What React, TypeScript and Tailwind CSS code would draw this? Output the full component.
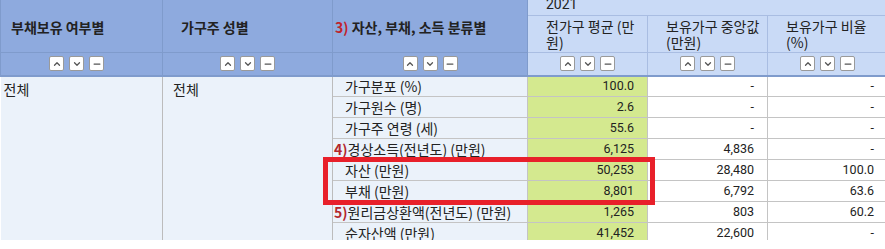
import { ChevronUp, ChevronDown, Minus } from "lucide-react";

const rows = [
  { no: "", label: "가구분포 (%)", avg: "100.0", med: "-", pct: "-" },
  { no: "", label: "가구원수 (명)", avg: "2.6", med: "-", pct: "-" },
  { no: "", label: "가구주 연령 (세)", avg: "55.6", med: "-", pct: "-" },
  { no: "4)", label: "경상소득(전년도) (만원)", avg: "6,125", med: "4,836", pct: "-" },
  { no: "", label: "자산 (만원)", avg: "50,253", med: "28,480", pct: "100.0" },
  { no: "", label: "부채 (만원)", avg: "8,801", med: "6,792", pct: "63.6" },
  { no: "5)", label: "원리금상환액(전년도) (만원)", avg: "1,265", med: "803", pct: "60.2" },
  { no: "", label: "순자산액 (만원)", avg: "41,452", med: "22,600", pct: "-" },
];

function SortButtons() {
  return (
    <div className="flex items-center justify-center gap-[5px]">
      {[ChevronUp, ChevronDown, Minus].map((Icon, i) => (
        <span
          key={i}
          className="w-[15px] h-[15px] bg-white border border-[#9a9a9a] rounded-[2px] flex items-center justify-center"
        >
          <Icon className="w-[10px] h-[10px] text-[#555]" strokeWidth={3} />
        </span>
      ))}
    </div>
  );
}

export default function App() {
  const font = { fontFamily: '"Noto Sans CJK KR", "Noto Sans", sans-serif' };
  const num = "font-['Roboto',sans-serif] text-[12.5px]";
  return (
    <div className="w-[885px] h-[249px] bg-white overflow-hidden" style={font}>
      <div className="relative w-[885px] h-[240px] overflow-hidden">
        <table className="table-fixed border-collapse w-[887px] -mt-[6px] text-[14px] leading-[16px] text-[#222]">
          <colgroup>
            <col className="w-[162px]" />
            <col className="w-[170px]" />
            <col className="w-[195px]" />
            <col className="w-[120px]" />
            <col className="w-[120px]" />
            <col className="w-[120px]" />
          </colgroup>
          <thead>
            <tr className="h-[21px]">
              <th rowSpan={2} className="bg-[#8eaade] border border-[#7f9bcc] text-left font-bold pl-[10px] pt-[6px]">
                부채보유 여부별
              </th>
              <th rowSpan={2} className="bg-[#8eaade] border border-[#7f9bcc] text-left font-bold pl-[18px] pt-[6px]">
                가구주 성별
              </th>
              <th rowSpan={2} className="bg-[#8eaade] border border-[#7f9bcc] text-left font-bold pl-[2px] pt-[6px]">
                <span className="text-[#c0232b]">3)</span> 자산, 부채, 소득 분류별
              </th>
              <th colSpan={3} className={`bg-[#c9daf6] border border-[#a9bde2] text-left font-normal pl-[18px] align-bottom pb-[3px] ${num} text-[14px]`}>
                2021
              </th>
            </tr>
            <tr className="h-[37px]">
              <th className="bg-[#c9daf6] border border-[#a9bde2] text-left font-normal pl-[18px] pr-[4px] align-middle">
                전가구 평균 (만원)
              </th>
              <th className="bg-[#c9daf6] border border-[#a9bde2] text-left font-normal pl-[18px] pr-[4px] align-middle">
                보유가구 중앙값 (만원)
              </th>
              <th className="bg-[#c9daf6] border border-[#a9bde2] text-left font-normal pl-[18px] pr-[4px] align-middle">
                보유가구 비율 (%)
              </th>
            </tr>
            <tr className="h-[23px]">
              <td className="bg-[#8eaade] border border-[#7f9bcc] border-b-2 pr-[10px]"><SortButtons /></td>
              <td className="bg-[#8eaade] border border-[#7f9bcc] border-b-2"><SortButtons /></td>
              <td className="bg-[#8eaade] border border-[#7f9bcc] border-b-2"><SortButtons /></td>
              <td className="bg-[#c9daf6] border border-[#a9bde2] border-b-2 border-b-[#7f9bcc]"><SortButtons /></td>
              <td className="bg-[#c9daf6] border border-[#a9bde2] border-b-2 border-b-[#7f9bcc]"><SortButtons /></td>
              <td className="bg-[#c9daf6] border border-[#a9bde2] border-b-2 border-b-[#7f9bcc]"><SortButtons /></td>
            </tr>
          </thead>
          <tbody>
            {rows.map((r, i) => (
              <tr key={r.label} className="h-[21px]">
                {i === 0 && (
                  <>
                    <td rowSpan={rows.length} className="bg-[#ebf2fa] border-r border-[#bcbcbc] align-top pl-[3px] pt-[4px]">
                      전체
                    </td>
                    <td rowSpan={rows.length} className="bg-[#ebf2fa] border-r border-[#bcbcbc] align-top pl-[10px] pt-[4px]">
                      전체
                    </td>
                  </>
                )}
                <td className="bg-[#ebf2fa] border-b border-r border-[#c4c4c4] whitespace-nowrap pl-[1px]">
                  {r.no ? (
                    <span className="font-bold text-[#b3262b]">{r.no}</span>
                  ) : (
                    <span className="inline-block w-[11px]" />
                  )}
                  {r.label}
                </td>
                <td className={`bg-[#d4e98f] border-b border-r border-[#c4c4c4] text-right pr-[13px] ${num}`}>{r.avg}</td>
                <td className={`bg-white border-b border-r border-[#c4c4c4] text-right pr-[13px] ${num}`}>{r.med}</td>
                <td className={`bg-white border-b border-r border-[#c4c4c4] text-right pr-[13px] ${num}`}>{r.pct}</td>
              </tr>
            ))}
          </tbody>
        </table>
        <div className="absolute left-[323px] top-[157px] w-[332px] h-[48px] border-[5px] border-[#e8202a]" />
      </div>
    </div>
  );
}
